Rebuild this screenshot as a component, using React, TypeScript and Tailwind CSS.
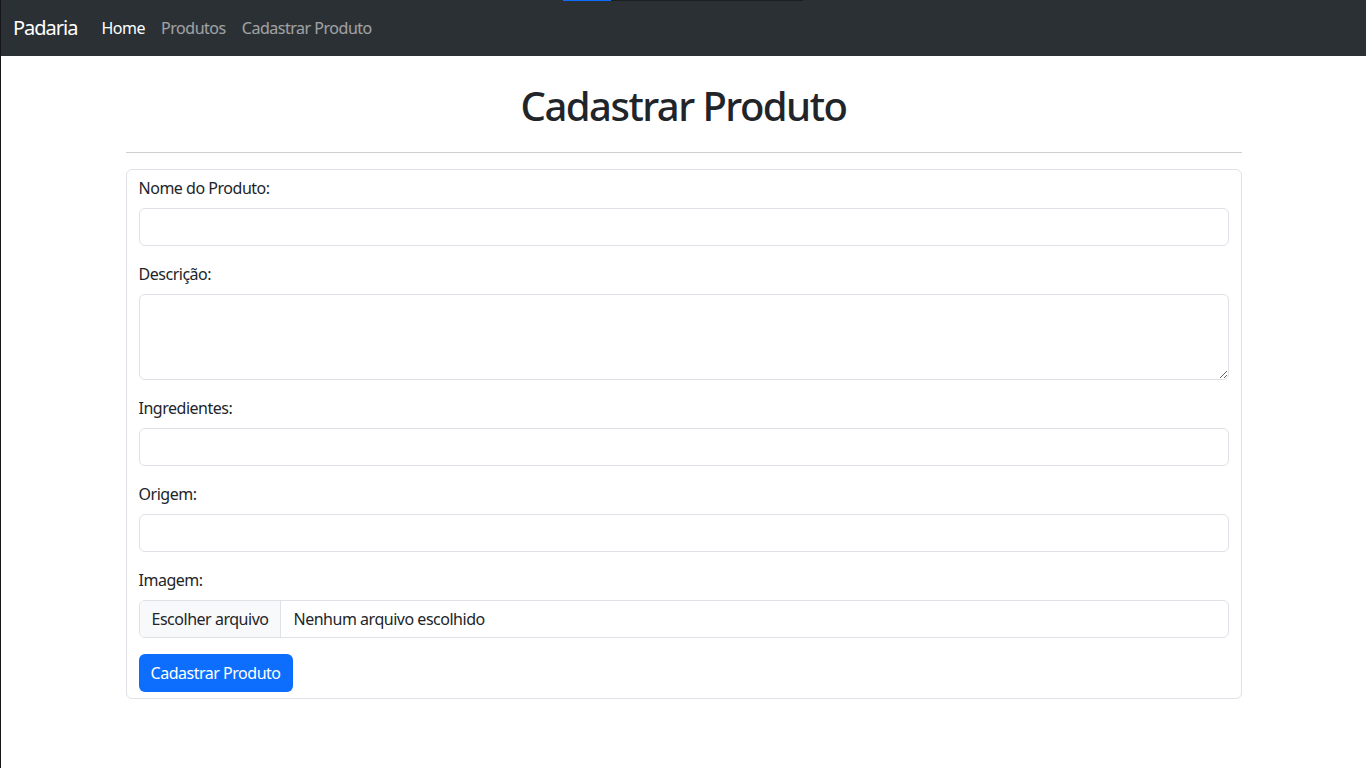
export default function App() {
  const font = { fontFamily: '"Segoe UI", "Noto Sans", "Liberation Sans", sans-serif' }

  const fields = [
    { label: "Nome do Produto:", type: "input" },
    { label: "Descrição:", type: "textarea" },
    { label: "Ingredientes:", type: "input" },
    { label: "Origem:", type: "input" },
  ]

  return (
    <div
      className="relative min-h-[768px] bg-white border-l border-[#16161a] text-[#212529] tracking-[-0.03em]"
      style={font}
    >
      {/* thin line at top of the window */}
      <div className="absolute top-0 left-[562px] flex h-px w-[240px] bg-[#1c1f22]">
        <div className="h-px w-[48px] bg-[#0d6efd]" />
      </div>

      {/* Navbar */}
      <nav className="flex h-14 items-center bg-[#2b3035] px-3">
        <span className="mr-4 text-[20px] leading-[30px] tracking-[-0.05em] text-white">Padaria</span>
        <ul className="flex text-[16px] leading-6">
          <li className="px-2 text-white">Home</li>
          <li className="px-2 text-white/55">Produtos</li>
          <li className="px-2 text-white/55">Cadastrar Produto</li>
        </ul>
      </nav>

      <div className="mx-auto w-[1140px] px-3">
        <h1 className="mt-[26px] mb-[22px] text-center text-[40px] leading-[48px] font-medium tracking-[-0.038em]">
          Cadastrar Produto
        </h1>
        <hr className="my-4 border-t border-[#cfcfcf]" />

        <form className="rounded-md border border-[#dee2e6] px-3 py-1.5">
          {fields.map((f) => (
            <div key={f.label} className="mb-4">
              <label className="block mb-2 text-[16px] leading-6">{f.label}</label>
              {f.type === "input" ? (
                <input
                  type="text"
                  className="block h-[38px] w-full rounded-md border border-[#dee2e6] px-3 text-[16px] outline-none"
                />
              ) : (
                <textarea
                  rows={3}
                  className="block h-[86px] w-full rounded-md border border-[#dee2e6] px-3 py-1.5 text-[16px] outline-none"
                />
              )}
            </div>
          ))}

          <div className="mb-4">
            <label className="block mb-2 text-[16px] leading-6">Imagem:</label>
            <div className="flex h-[38px] w-full items-center overflow-hidden rounded-md border border-[#dee2e6] text-[16px]">
              <span className="flex h-full items-center whitespace-nowrap border-r border-[#dee2e6] bg-[#f8f9fa] px-3">
                Escolher arquivo
              </span>
              <span className="whitespace-nowrap px-3">Nenhum arquivo escolhido</span>
            </div>
          </div>

          <button
            type="button"
            className="h-[38px] rounded-md bg-[#0d6efd] px-3 text-[16px] text-white"
          >
            Cadastrar Produto
          </button>
        </form>
      </div>
    </div>
  )
}
